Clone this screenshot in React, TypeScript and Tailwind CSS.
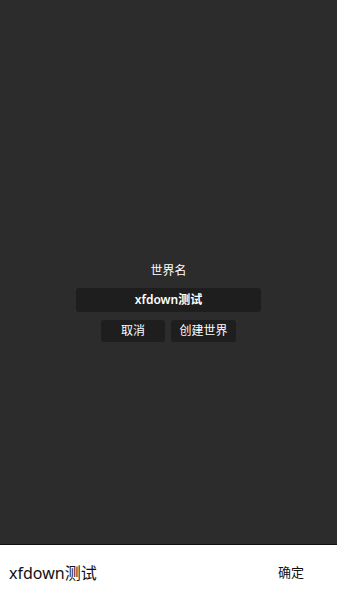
export default function App() {
  return (
    <div
      className="flex h-[600px] w-[337px] flex-col bg-[#2c2c2c]"
      style={{ fontFamily: '"Noto Sans", "Noto Sans CJK SC", sans-serif' }}
    >
      <div className="flex flex-1 flex-col items-center pt-[262px]">
        <div className="text-[12px] leading-[17px] text-white">世界名</div>
        <div className="mt-[9px] flex h-[24px] w-[185px] items-center justify-center rounded-[3px] bg-[#1e1e1e] text-[12px] font-semibold text-white">
          xfdown测试
        </div>
        <div className="mt-[8px] flex gap-[6px]">
          <button className="h-[22px] w-[64px] rounded-[3px] bg-[#1e1e1e] text-[12px] text-white">
            取消
          </button>
          <button className="h-[22px] w-[65px] rounded-[3px] bg-[#1e1e1e] text-[12px] text-white">
            创建世界
          </button>
        </div>
      </div>
      <div className="flex h-[56px] items-center justify-between border-t border-[#111] bg-white pl-[9px] pr-[33px]">
        <span className="text-[16px] text-[#111]">xfdown测试</span>
        <span className="text-[13px] text-[#111]">确定</span>
      </div>
    </div>
  );
}
